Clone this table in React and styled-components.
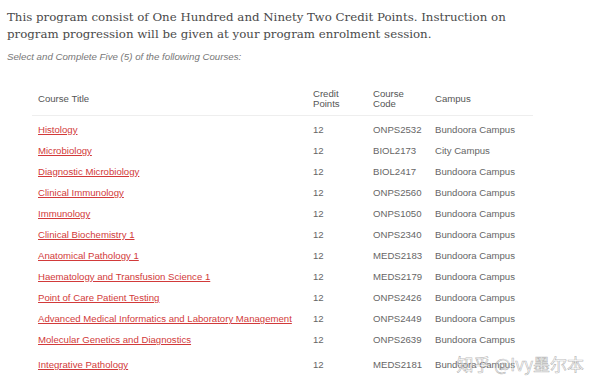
import React from "react"
import styled, { createGlobalStyle } from "styled-components"

const courses = [
	["Histology", "ONPS2532", "Bundoora Campus"],
	["Microbiology", "BIOL2173", "City Campus"],
	["Diagnostic Microbiology", "BIOL2417", "Bundoora Campus"],
	["Clinical Immunology", "ONPS2560", "Bundoora Campus"],
	["Immunology", "ONPS1050", "Bundoora Campus"],
	["Clinical Biochemistry 1", "ONPS2340", "Bundoora Campus"],
	["Anatomical Pathology 1", "MEDS2183", "Bundoora Campus"],
	["Haematology and Transfusion Science 1", "MEDS2179", "Bundoora Campus"],
	["Point of Care Patient Testing", "ONPS2426", "Bundoora Campus"],
	["Advanced Medical Informatics and Laboratory Management", "ONPS2449", "Bundoora Campus"],
	["Molecular Genetics and Diagnostics", "ONPS2639", "Bundoora Campus"],
	["Integrative Pathology", "MEDS2181", "Bundoora Campus"],
]

const App = () => (
	<Page>
		<GlobalStyle />
		<Intro>
			This program consist of One Hundred and Ninety Two Credit Points. Instruction on
			program progression will be given at your program enrolment session.
		</Intro>
		<Note>Select and Complete Five (5) of the following Courses:</Note>
		<Table>
			<HeadRow>
				<Cell>Course Title</Cell>
				<Cell>
					Credit
					<br />
					Points
				</Cell>
				<Cell>
					Course
					<br />
					Code
				</Cell>
				<Cell>Campus</Cell>
			</HeadRow>
			{courses.map(([title, code, campus], i) => (
				<Row key={code} $last={i === courses.length - 1}>
					<Cell>
						<CourseLink href="#">{title}</CourseLink>
					</Cell>
					<Cell>12</Cell>
					<Cell>{code}</Cell>
					<Cell>{campus}</Cell>
				</Row>
			))}
		</Table>
		<Watermark>知乎 @Ivy墨尔本</Watermark>
	</Page>
)

const GlobalStyle = createGlobalStyle`
	body {
		margin: 0;
		background: #fff;
	}
`

const Page = styled.div`
	position: relative;
	width: 600px;
	height: 390px;
	overflow: hidden;
	padding: 9px 0 0 7px;
	box-sizing: border-box;
	font-family: "Liberation Sans", Arial, sans-serif;
	color: #666;
`

const Intro = styled.p`
	margin: 0;
	width: 520px;
	font-family: "DejaVu Serif", serif;
	font-size: 11.8px;
	line-height: 17px;
	color: #4a4a4a;
`

const Note = styled.p`
	margin: 8px 0 0;
	font-size: 9.7px;
	font-style: italic;
	color: #777;
`

const Table = styled.div`
	width: 501px;
	margin: 21px 0 0 25px;
	font-size: 9.6px;
`

const HeadRow = styled.div`
	display: grid;
	grid-template-columns: 275px 60px 62px 104px;
	align-items: center;
	height: 32px;
	border-bottom: 1px solid #eee;
	margin-bottom: 3px;
	line-height: 10px;
	color: #555;
`

const Row = styled.div`
	display: grid;
	grid-template-columns: 275px 60px 62px 104px;
	align-items: center;
	height: 21px;
	margin-top: ${({ $last }) => ($last ? "4px" : "0")};
	color: #666;
`

const Cell = styled.div`
	padding-left: 6px;
	white-space: nowrap;
`

const CourseLink = styled.a`
	color: #d23a3a;
	text-decoration: underline;
`

const Watermark = styled.div`
	position: absolute;
	right: 16px;
	bottom: 14px;
	font-family: "Noto Sans CJK SC", sans-serif;
	font-size: 17px;
	color: rgba(255, 255, 255, 0.55);
	-webkit-text-stroke: 0.6px rgba(120, 120, 120, 0.55);
`

export default App
